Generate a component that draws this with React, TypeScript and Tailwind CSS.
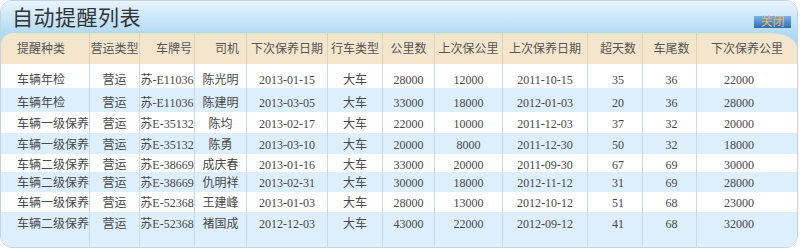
import React from 'react';

type Row = string[];

const columns = [
  { title: '提醒种类', w: 'w-[89px]', align: 'justify-start pl-[16px]', head: 'justify-start pl-[16px]' },
  { title: '营运类型', w: 'w-[50px]', align: 'justify-center', head: 'justify-center' },
  { title: '车牌号', w: 'w-[55px]', align: 'justify-center', head: 'justify-end pr-[2px]' },
  { title: '司机', w: 'w-[52px]', align: 'justify-center', head: 'justify-end pr-[7px]' },
  { title: '下次保养日期', w: 'w-[81px]', align: 'justify-center', head: 'justify-center' },
  { title: '行车类型', w: 'w-[55px]', align: 'justify-center', head: 'justify-center' },
  { title: '公里数', w: 'w-[52px]', align: 'justify-center', head: 'justify-center' },
  { title: '上次保公里', w: 'w-[68px]', align: 'justify-center', head: 'justify-center' },
  { title: '上次保养日期', w: 'w-[85px]', align: 'justify-center', head: 'justify-center' },
  { title: '超天数', w: 'w-[55px]', align: 'justify-center pl-[6px]', head: 'justify-center pl-[6px]' },
  { title: '车尾数', w: 'w-[54px]', align: 'justify-center pl-[4px]', head: 'justify-center pl-[4px]' },
  { title: '下次保养公里', w: 'flex-1', align: 'justify-center pr-[16px]', head: 'justify-center' },
];

const rows: Row[] = [
  ['车辆年检', '营运', '苏-E11036', '陈光明', '2013-01-15', '大车', '28000', '12000', '2011-10-15', '35', '36', '22000'],
  ['车辆年检', '营运', '苏-E11036', '陈建明', '2013-03-05', '大车', '33000', '18000', '2012-01-03', '20', '36', '28000'],
  ['车辆一级保养', '营运', '苏E-35132', '陈均', '2013-02-17', '大车', '22000', '10000', '2011-12-03', '37', '32', '20000'],
  ['车辆一级保养', '营运', '苏E-35132', '陈勇', '2013-03-10', '大车', '20000', '8000', '2011-12-30', '50', '32', '18000'],
  ['车辆二级保养', '营运', '苏E-38669', '成庆春', '2013-01-16', '大车', '33000', '20000', '2011-09-30', '67', '69', '30000'],
  ['车辆二级保养', '营运', '苏E-38669', '仇明祥', '2013-02-31', '大车', '30000', '18000', '2012-11-12', '31', '69', '28000'],
  ['车辆一级保养', '营运', '苏E-52368', '王建峰', '2013-01-03', '大车', '28000', '13000', '2012-10-12', '51', '68', '23000'],
  ['车辆二级保养', '营运', '苏E-52368', '褚国成', '2012-12-03', '大车', '43000', '22000', '2012-09-12', '41', '68', '32000'],
];

// row height + top padding, taken from the screenshot
const rowStyle = [
  'h-[24px] pt-[9px]',
  'h-[24px] pt-[8px]',
  'h-[21px] pt-[5px]',
  'h-[21px] pt-[5px]',
  'h-[18px] pt-[4px]',
  'h-[20px] pt-[4px]',
  'h-[20px] pt-[4px]',
  'h-[35px] pt-[5px]',
];

const App: React.FC = () => {
  return (
    <div className="w-[800px] h-[250px] bg-white font-['Liberation_Serif','Noto_Sans_CJK_SC',serif] text-[12px] leading-[14px] text-[#484848]">
      <div className="w-[798px] h-[248px] rounded-[12px] border border-[#c4d3de] overflow-hidden flex flex-col">

        {/* title + header */}
        <div className="bg-linear-to-b from-[#e8f4fd] via-[#b3dbf6] via-50% to-[#9fd0f2]">
          <div className="h-[32px] flex items-end justify-between pl-[11px] pr-[6px]">
            <h1 className="text-[21px] leading-[21px] pb-[4px] text-[#333] font-normal tracking-[0.5px]">自动提醒列表</h1>
            <button className="h-[12px] w-[37px] mb-[5px] bg-linear-to-b from-[#7ab2e6] to-[#2f6cb3] text-[#f2b25a] text-[12px] leading-[12px] flex items-center justify-center">
              关闭
            </button>
          </div>

          <div className="h-[31px] flex bg-[#f3e6cd] rounded-tl-[12px] rounded-tr-[30px_14px] text-[#555]">
            {columns.map((c, i) => (
              <div
                key={i}
                className={`${c.w} ${c.head} flex items-center pt-[1px] ${i < columns.length - 1 ? 'border-r border-[#e3d2b3]' : ''}`}
              >
                {c.title}
              </div>
            ))}
          </div>
        </div>

        {/* body */}
        <div className="flex-1 flex flex-col">
          {rows.map((r, ri) => (
            <div
              key={ri}
              className={`flex ${ri === rows.length - 1 ? 'flex-1' : ''} ${ri % 2 === 0 ? 'bg-white' : 'bg-[#ddeefc]'}`}
            >
              {r.map((cell, ci) => (
                <div
                  key={ci}
                  className={`${columns[ci].w} ${columns[ci].align} ${rowStyle[ri]} ${ri === rows.length - 1 ? 'h-auto' : ''} flex items-start whitespace-nowrap ${ci < columns.length - 1 ? 'border-r border-[#cbd9e5]' : ''}`}
                >
                  {cell}
                </div>
              ))}
            </div>
          ))}
        </div>

      </div>
    </div>
  );
};

export default App;
